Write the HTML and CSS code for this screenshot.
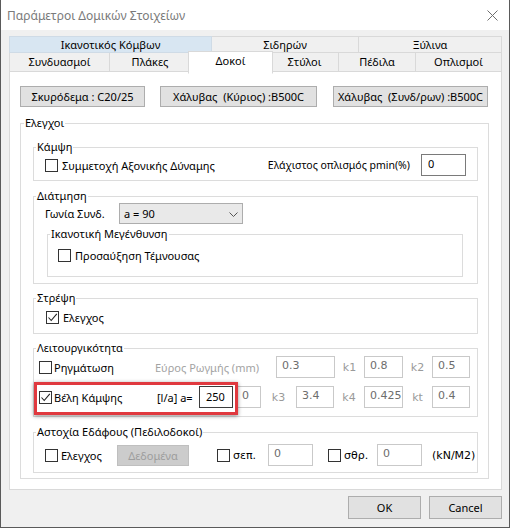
FILE: index.html
```html
<!DOCTYPE html>
<html>
<head>
<meta charset="utf-8">
<title>Παράμετροι Δομικών Στοιχείων</title>
<link rel="stylesheet" href="styles.css">
</head>
<body>
<div class="window">
  <div class="titlebar">
    <span class="title">Παράμετροι Δομικών Στοιχείων</span>
    <svg class="close" width="11" height="11" viewBox="0 0 11 11"><path d="M0.5 0.5L10.5 10.5M10.5 0.5L0.5 10.5" stroke="#6e6e6e" stroke-width="1" fill="none"/></svg>
  </div>
  <div class="client">
    <div class="tabs">
      <div class="tabrow row1">
        <div class="tab hover t1a">Ικανοτικός Κόμβων</div>
        <div class="tab t1b">Σιδηρών</div>
        <div class="tab t1c">Ξύλινα</div>
      </div>
      <div class="tabrow row2">
        <div class="tab t2a">Συνδυασμοί</div>
        <div class="tab t2b">Πλάκες</div>
        <div class="tab t2c selected">Δοκοί</div>
        <div class="tab t2d">Στύλοι</div>
        <div class="tab t2e">Πέδιλα</div>
        <div class="tab t2f">Οπλισμοί</div>
      </div>
    </div>
    <div class="panel">
      <div class="matrow">
        <div class="btn mb1">Σκυρόδεμα : C20/25</div>
        <div class="btn mb2">Χάλυβας&nbsp; (Κύριος) :B500C</div>
        <div class="btn mb3">Χάλυβας&nbsp; (Συνδ/ρων) :B500C</div>
      </div>
      <fieldset class="grp outer">
        <legend>Ελεγχοι</legend>
        <div class="outer-body">
          <fieldset class="grp inner kampsi">
            <legend>Κάμψη</legend>
            <div class="body kampsi-body">
              <div class="row h22">
                <span class="cb"></span><span class="cbl">Συμμετοχή Αξονικής Δύναμης</span>
                <span class="pmin">Ελάχιστος οπλισμός pmin(%)</span>
                <span class="tb active w45">0</span>
              </div>
            </div>
          </fieldset>
          <fieldset class="grp inner diatm">
            <legend>Διάτμηση</legend>
            <div class="body diatm-body">
              <div class="row h21">
                <span class="gon">Γωνία Συνδ.</span>
                <span class="combo"><span>a = 90</span>
                  <svg width="9" height="5" viewBox="0 0 9 5"><path d="M0.5 0.5L4.5 4.5L8.5 0.5" stroke="#555" stroke-width="1" fill="none"/></svg>
                </span>
              </div>
              <fieldset class="grp ikan">
                <legend>Ικανοτική Μεγένθυνση</legend>
                <div class="body ikan-body">
                  <div class="row h20">
                    <span class="cb"></span><span class="cbl">Προσαύξηση Τέμνουσας</span>
                  </div>
                </div>
              </fieldset>
            </div>
          </fieldset>
          <fieldset class="grp inner strepsi">
            <legend>Στρέψη</legend>
            <div class="body strepsi-body">
              <div class="row h20">
                <span class="cb checked"><svg width="11" height="11" viewBox="0 0 11 11"><path d="M1.5 5.5L4.2 8.5L9.8 1.8" stroke="#222" stroke-width="1.1" fill="none"/></svg></span><span class="cbl">Ελεγχος</span>
              </div>
            </div>
          </fieldset>
          <fieldset class="grp inner leit">
            <legend>Λειτουργικότητα</legend>
            <div class="body leit-body">
              <div class="row h22">
                <span class="cell c116"><span class="cb"></span><span class="cbl2">Ρηγμάτωση</span></span>
                <span class="cell c121 gray">Εύρος Ρωγμής (mm)</span>
                <span class="tb dis w59">0.3</span>
                <span class="cell k w29">k1</span>
                <span class="tb dis w39">0.8</span>
                <span class="cell k w29">k2</span>
                <span class="tb dis w38">0.5</span>
              </div>
              <div class="row h22 row-vel">
                <span class="cell c118"><span class="cb checked"><svg width="11" height="11" viewBox="0 0 11 11"><path d="M1.5 5.5L4.2 8.5L9.8 1.8" stroke="#222" stroke-width="1.1" fill="none"/></svg></span><span class="cbl2">Βέλη Κάμψης</span></span>
                <span class="cell c42">[l/a] a=</span>
                <span class="tb focus w34">250</span>
                <span class="sp3"></span>
                <span class="tb dis w25">0</span>
                <span class="cell k w35">k3</span>
                <span class="tb dis w38">3.4</span>
                <span class="cell k w30">k4</span>
                <span class="tb dis w39">0.425</span>
                <span class="cell k w29">kt</span>
                <span class="tb dis w38">0.4</span>
                <span class="highlight"></span>
              </div>
            </div>
          </fieldset>
          <fieldset class="grp inner asto">
            <legend>Αστοχία Εδάφους (Πεδιλοδοκοί)</legend>
            <div class="body asto-body">
              <div class="row h23">
                <span class="cell c72"><span class="cb"></span><span class="cbl3">Ελεγχος</span></span>
                <span class="btn disabled dbtn">Δεδομένα</span>
                <span class="cell c51 m28"><span class="cb"></span><span class="cbl3 tah">σεπ.</span></span>
                <span class="tb dis w45">0</span>
                <span class="cell c49 m15"><span class="cb"></span><span class="cbl3 tah">σθρ.</span></span>
                <span class="tb dis w45">0</span>
                <span class="unit tah">(kN/M2)</span>
              </div>
            </div>
          </fieldset>
        </div>
      </fieldset>
    </div>
    <div class="footer">
      <div class="btn fbtn">OK</div>
      <div class="btn fbtn">Cancel</div>
    </div>
  </div>
</div>
</body>
</html>
```

FILE: styles.css
```css
* { box-sizing: border-box; }
html, body { margin: 0; padding: 0; }
body {
  width: 510px;
  height: 528px;
  overflow: hidden;
  background: #f0f0f0;
  font-family: "Noto Sans", "DejaVu Sans", sans-serif;
  font-size: 11px;
  color: #000;
}
.window {
  width: 510px;
  height: 528px;
  border: 1px solid #5a5a5a;
  border-top: none;
  background: #f0f0f0;
}
.titlebar {
  height: 30px;
  background: #fff;
  display: flex;
  align-items: center;
  justify-content: space-between;
  padding: 0 11px 0 6px;
}
.title { color: #7a7a7a; font-size: 12px; }
.close { display: block; }
.client { padding: 6px 7px 0 8px; }

/* tabs */
.tabs { position: relative; z-index: 2; }
.tabrow { display: flex; align-items: flex-end; }
.tab {
  border: 1px solid #d9d9d9;
  margin-right: -1px;
  background: #f0f0f0;
  display: flex;
  align-items: center;
  justify-content: center;
  line-height: 14px;
  position: relative;
}
.row1 .tab { height: 17px; }
.row2 { margin-top: -1px; height: 20px; }
.row2 .tab { height: 20px; }
.tab.hover { background: #d8e6f2; border-color: #cfdbe6; z-index: 1; }
.t1a { width: 203px; }
.t1b { width: 148px; }
.t1c { width: 144px; }
.t2a { width: 101px; }
.t2b { width: 82px; }
.t2c { width: 81px; }
.t2d { width: 69px; }
.t2e { width: 78px; }
.t2f { width: 87px; }
.tab.selected {
  background: #fff;
  border-bottom-color: #fff;
  height: 23px;
  width: 85px;
  margin-left: -2px;
  margin-right: -3px;
  margin-bottom: -2px;
  z-index: 3;
  padding-bottom: 3px;
}

/* panel */
.panel {
  margin-top: -1px;
  width: 493px;
  height: 419px;
  background: #fff;
  border: 1px solid #d9d9d9;
  padding: 14px 0 0 10px;
  position: relative;
  z-index: 1;
}
.btn {
  border: 1px solid #adadad;
  background: #e1e1e1;
  display: flex;
  align-items: center;
  justify-content: center;
  height: 21px;
  white-space: nowrap;
  line-height: 14px;
}
.matrow { display: flex; }
.mb1 { width: 125px; }
.mb2 { width: 157px; margin-left: 15px; }
.mb3 { width: 155px; margin-left: 16px; }

/* group boxes */
.grp {
  margin: 0;
  padding: 0;
  border: 1px solid #dcdcdc;
  min-width: 0;
}
.grp > legend {
  padding: 0 1px;
  margin-left: 2px;
  line-height: 14px;
  font-size: 11px;
}
.outer { width: 469px; margin-top: 9px; }
.outer > legend { margin-left: 3px; }
.outer-body { padding: 5px 10px 5px 12px; }
.inner { width: 445px; }
.row { display: flex; align-items: center; position: relative; }
.h20 { height: 20px; }
.h21 { height: 21px; }
.h22 { height: 22px; }
.h23 { height: 23px; }

.cb {
  width: 13px;
  height: 13px;
  border: 1px solid #333;
  background: #fff;
  flex-shrink: 0;
  display: flex;
  align-items: center;
  justify-content: center;
}
.cb svg { display: block; }
.cbl { margin-left: 4px; white-space: nowrap; }
.cbl2 { margin-left: 2px; white-space: nowrap; }
.cbl3 { margin-left: 3px; white-space: nowrap; }

.tb {
  height: 22px;
  border: 1px solid #c9c9c9;
  background: #fff;
  padding: 2px 0 0 5px;
  font-family: "DejaVu Sans", sans-serif;
  font-size: 11px;
  line-height: 14px;
  color: #6d6d6d;
  flex-shrink: 0;
  align-self: flex-start;
}
.tb.active { border-color: #7a7a7a; color: #000; font-family: "Noto Sans", sans-serif; font-size: 11px; padding-left: 6px; }
.tb.focus { border-color: #3c3c3c; color: #000; font-family: "Noto Sans", sans-serif; font-size: 11px; padding: 3px 0 0 6px; }
.w25 { width: 25px; }
.w34 { width: 34px; }
.w38 { width: 38px; }
.w39 { width: 39px; }
.w45 { width: 45px; }
.w59 { width: 59px; }

.kampsi { margin-top: 5px; }
.kampsi-body { padding: 0 11px 4px 11px; }
.pmin { margin-left: auto; margin-right: 11px; white-space: nowrap; font-size: 10.5px; }

.diatm { margin-top: 8px; }
.diatm-body { padding: 0 14px 6px 11px; }
.gon { width: 74px; white-space: nowrap; }
.combo {
  width: 124px;
  height: 21px;
  border: 1px solid #adadad;
  background: #e9e9e9;
  display: flex;
  align-items: center;
  justify-content: space-between;
  padding: 0 4px 0 4px;
}
.combo svg { display: block; margin-top: 1px; }
.ikan { width: 416px; margin-top: 3px; margin-left: 2px; }
.ikan > legend { margin-left: 2px; }
.ikan-body { padding: 4px 0 11px 10px; }

.strepsi { margin-top: 7px; }
.strepsi-body { padding: 2px 0 6px 12px; }

.leit { margin-top: 7px; }
.leit-body { padding: 1px 0 8px 5px; }
.row-vel { margin-top: 8px; }
.cell { display: flex; align-items: center; flex-shrink: 0; white-space: nowrap; }
.c116 { width: 116px; }
.c118 { width: 118px; }
.c121 { width: 121px; }
.c42 { width: 42px; }
.c72 { width: 72px; }
.c51 { width: 51px; }
.c49 { width: 49px; }
.m28 { margin-left: 28px; }
.m15 { margin-left: 15px; }
.w29 { width: 29px; }
.w30 { width: 30px; }
.w35 { width: 35px; }
.gray { color: #a3a3a3; }
.k {
  justify-content: center;
  color: #9a9a9a;
  font-family: "DejaVu Sans", sans-serif;
  font-size: 11px;
}
.tah { font-family: "DejaVu Sans", sans-serif; font-size: 11px; }
.sp3 { width: 3px; flex-shrink: 0; }
.highlight {
  position: absolute;
  left: -5px;
  top: -4px;
  width: 204px;
  height: 33px;
  border: 3px solid #e0393f;
  box-shadow: 0 1px 4px rgba(0, 0, 0, 0.45);
  pointer-events: none;
}

.asto { margin-top: 8px; }
.asto-body { padding: 5px 0 5px 11px; }
.dbtn {
  width: 72px;
  background: #cccccc;
  border-color: #bfbfbf;
  color: #9d9d9d;
  flex-shrink: 0;
}
.unit { margin-left: 10px; white-space: nowrap; }

.footer {
  display: flex;
  justify-content: flex-end;
  width: 493px;
  margin-top: 6px;
}
.fbtn { width: 73px; height: 23px; margin-left: 8px; }
```
